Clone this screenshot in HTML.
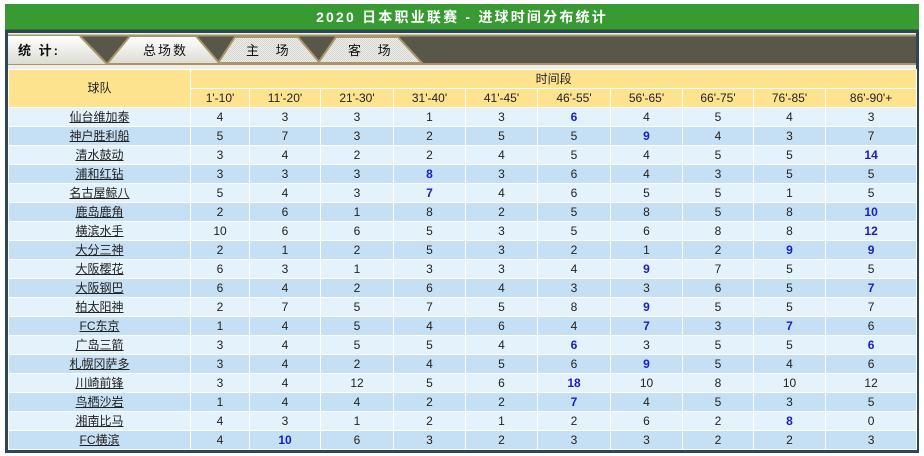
<!DOCTYPE html>
<html><head><meta charset="utf-8"><style>
*{margin:0;padding:0;box-sizing:border-box}
body{width:924px;height:456px;background:#fff;font-family:"Liberation Sans","Noto Sans CJK SC",sans-serif;font-size:12px;color:#222;position:relative;overflow:hidden}
#title{position:absolute;left:5px;top:4px;width:914px;height:26px;background:#389a32;color:#fff;font-weight:bold;font-size:14px;text-align:center;line-height:27px;letter-spacing:2.2px;border-bottom:1px solid #2e7a2a}
#box{position:absolute;left:5px;top:30px;width:914px;height:423px;border:3px solid #2d4758;background:#f2f0e8}
#tabs{position:absolute;left:0;top:0}
table{position:absolute;left:0px;top:36px;width:908px;border-collapse:collapse;table-layout:fixed}
td{height:19px;text-align:center;border:1px solid #fff;padding:0;line-height:17px;white-space:nowrap}
.h td{background:#fee38f}
tr.a td{background:#e4f2fb}
tr.b td{background:#c5e0f4}
td.t{text-decoration:underline;color:#222}
b{color:#1a1ac8;font-weight:bold}
</style></head><body>
<div id="title">2020 日本职业联赛 - 进球时间分布统计</div>
<div id="box">
<svg id="tabs" width="908" height="36" viewBox="0 0 908 36">
<defs>
<linearGradient id="g" x1="0" y1="0" x2="0" y2="1"><stop offset="0" stop-color="#ffffff"/><stop offset="1" stop-color="#dcdcd4"/></linearGradient>
<pattern id="h" width="2" height="2" patternUnits="userSpaceOnUse"><rect width="2" height="2" fill="#d4d4d0"/><rect width="1" height="1" fill="#eeeeea"/><rect x="1" y="1" width="1" height="1" fill="#eeeeea"/></pattern>
</defs>
<rect x="0" y="0" width="908" height="36" fill="#f0eee6"/>
<rect x="0" y="2" width="908" height="30" fill="#59564a"/>
<line x1="0" y1="2.5" x2="908" y2="2.5" stroke="#a8966a" stroke-width="2"/>
<line x1="0" y1="31" x2="908" y2="31" stroke="#a8966a" stroke-width="2"/>
<polygon points="0,3 72,3 99,31 0,31" fill="url(#g)"/>
<polyline points="72,3 99,31" stroke="#a8966a" stroke-width="2" fill="none"/>
<polygon points="310,30 328,4 390,4 414,30" fill="url(#h)" stroke="#a8966a" stroke-width="2"/>
<polygon points="210,30 227,4 290,4 312,30" fill="url(#h)" stroke="#a8966a" stroke-width="2"/>
<polygon points="99,31 122,3 188,3 212,31" fill="url(#g)" stroke="#a8966a" stroke-width="2"/>
<text x="10" y="22" font-size="13" font-weight="bold" fill="#111" font-family="Liberation Sans,Noto Sans CJK SC,sans-serif" letter-spacing="2">统 计:</text>
<text x="135" y="22" font-size="13" fill="#111" font-family="Liberation Sans,Noto Sans CJK SC,sans-serif" letter-spacing="2">总场数</text>
<text x="238" y="22" font-size="13" fill="#111" font-family="Liberation Sans,Noto Sans CJK SC,sans-serif">主　 场</text>
<text x="340" y="22" font-size="13" fill="#111" font-family="Liberation Sans,Noto Sans CJK SC,sans-serif">客　 场</text>
</svg>
<table>
<colgroup><col style="width:182px"><col style="width:59px"><col style="width:71px"><col style="width:73px"><col style="width:72px"><col style="width:72px"><col style="width:73px"><col style="width:72px"><col style="width:71px"><col style="width:72px"><col style="width:91px"></colgroup>
<tr class="h"><td rowspan="2" style="height:38px">球队</td><td colspan="10">时间段</td></tr>
<tr class="h"><td>1'-10'</td><td>11'-20'</td><td>21'-30'</td><td>31'-40'</td><td>41'-45'</td><td>46'-55'</td><td>56'-65'</td><td>66'-75'</td><td>76'-85'</td><td>86'-90'+</td></tr>
<tr class="a"><td class="t">仙台维加泰</td><td>4</td><td>3</td><td>3</td><td>1</td><td>3</td><td><b>6</b></td><td>4</td><td>5</td><td>4</td><td>3</td></tr>
<tr class="b"><td class="t">神户胜利船</td><td>5</td><td>7</td><td>3</td><td>2</td><td>5</td><td>5</td><td><b>9</b></td><td>4</td><td>3</td><td>7</td></tr>
<tr class="a"><td class="t">清水鼓动</td><td>3</td><td>4</td><td>2</td><td>2</td><td>4</td><td>5</td><td>4</td><td>5</td><td>5</td><td><b>14</b></td></tr>
<tr class="b"><td class="t">浦和红钻</td><td>3</td><td>3</td><td>3</td><td><b>8</b></td><td>3</td><td>6</td><td>4</td><td>3</td><td>5</td><td>5</td></tr>
<tr class="a"><td class="t">名古屋鲸八</td><td>5</td><td>4</td><td>3</td><td><b>7</b></td><td>4</td><td>6</td><td>5</td><td>5</td><td>1</td><td>5</td></tr>
<tr class="b"><td class="t">鹿岛鹿角</td><td>2</td><td>6</td><td>1</td><td>8</td><td>2</td><td>5</td><td>8</td><td>5</td><td>8</td><td><b>10</b></td></tr>
<tr class="a"><td class="t">横滨水手</td><td>10</td><td>6</td><td>6</td><td>5</td><td>3</td><td>5</td><td>6</td><td>8</td><td>8</td><td><b>12</b></td></tr>
<tr class="b"><td class="t">大分三神</td><td>2</td><td>1</td><td>2</td><td>5</td><td>3</td><td>2</td><td>1</td><td>2</td><td><b>9</b></td><td><b>9</b></td></tr>
<tr class="a"><td class="t">大阪樱花</td><td>6</td><td>3</td><td>1</td><td>3</td><td>3</td><td>4</td><td><b>9</b></td><td>7</td><td>5</td><td>5</td></tr>
<tr class="b"><td class="t">大阪钢巴</td><td>6</td><td>4</td><td>2</td><td>6</td><td>4</td><td>3</td><td>3</td><td>6</td><td>5</td><td><b>7</b></td></tr>
<tr class="a"><td class="t">柏太阳神</td><td>2</td><td>7</td><td>5</td><td>7</td><td>5</td><td>8</td><td><b>9</b></td><td>5</td><td>5</td><td>7</td></tr>
<tr class="b"><td class="t">FC东京</td><td>1</td><td>4</td><td>5</td><td>4</td><td>6</td><td>4</td><td><b>7</b></td><td>3</td><td><b>7</b></td><td>6</td></tr>
<tr class="a"><td class="t">广岛三箭</td><td>3</td><td>4</td><td>5</td><td>5</td><td>4</td><td><b>6</b></td><td>3</td><td>5</td><td>5</td><td><b>6</b></td></tr>
<tr class="b"><td class="t">札幌冈萨多</td><td>3</td><td>4</td><td>2</td><td>4</td><td>5</td><td>6</td><td><b>9</b></td><td>5</td><td>4</td><td>6</td></tr>
<tr class="a"><td class="t">川崎前锋</td><td>3</td><td>4</td><td>12</td><td>5</td><td>6</td><td><b>18</b></td><td>10</td><td>8</td><td>10</td><td>12</td></tr>
<tr class="b"><td class="t">鸟栖沙岩</td><td>1</td><td>4</td><td>4</td><td>2</td><td>2</td><td><b>7</b></td><td>4</td><td>5</td><td>3</td><td>5</td></tr>
<tr class="a"><td class="t">湘南比马</td><td>4</td><td>3</td><td>1</td><td>2</td><td>1</td><td>2</td><td>6</td><td>2</td><td><b>8</b></td><td>0</td></tr>
<tr class="b"><td class="t">FC横滨</td><td>4</td><td><b>10</b></td><td>6</td><td>3</td><td>2</td><td>3</td><td>3</td><td>2</td><td>2</td><td>3</td></tr>
</table>
</div>
</body></html>
